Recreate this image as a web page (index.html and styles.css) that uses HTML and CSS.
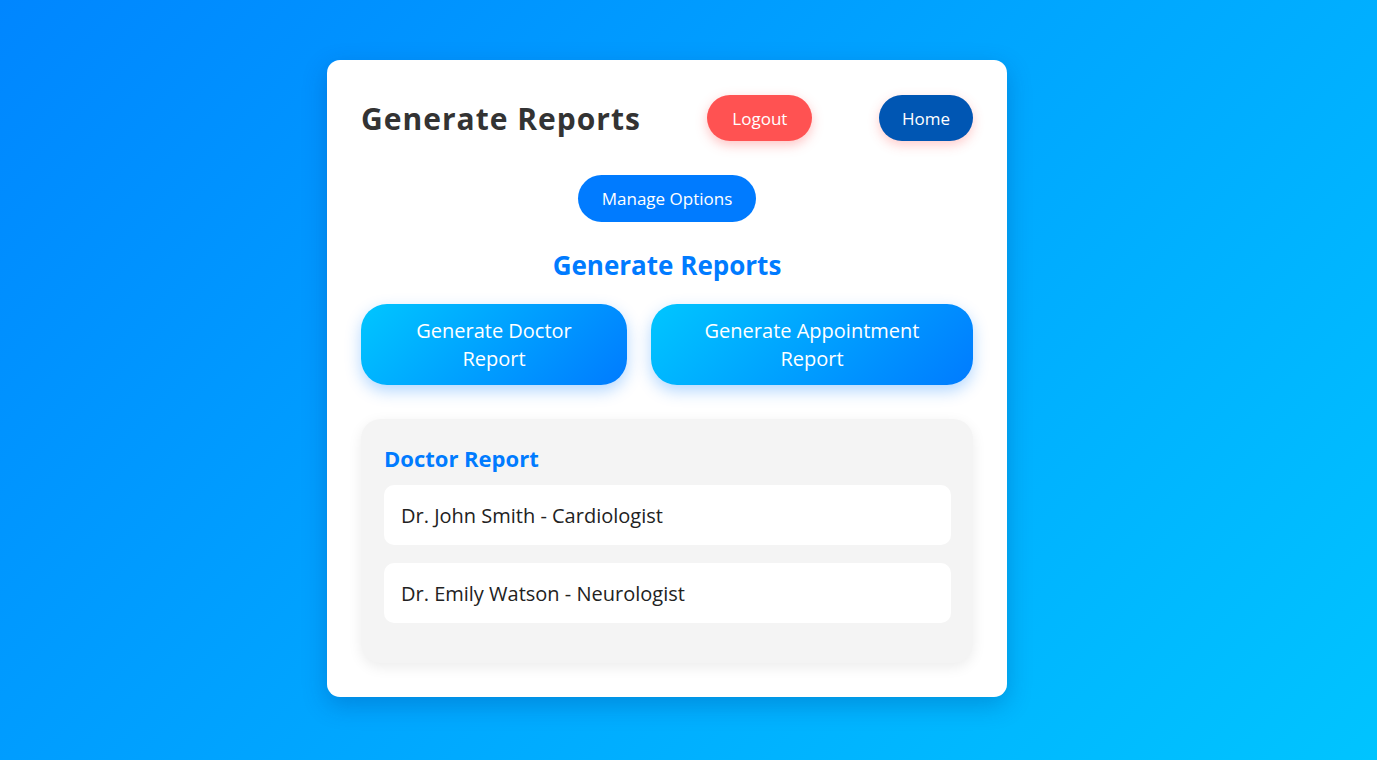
FILE: index.html
```html
<!DOCTYPE html>
<html lang="en">
<head>
<meta charset="utf-8">
<title>Generate Reports</title>
<link rel="stylesheet" href="styles.css">
</head>
<body>
<div class="card">
  <header class="header">
    <h1 class="title">Generate Reports</h1>
    <button class="btn btn-logout">Logout</button>
    <button class="btn btn-home">Home</button>
  </header>
  <div class="manage-row">
    <button class="btn btn-manage">Manage Options</button>
  </div>
  <h2 class="section-title">Generate Reports</h2>
  <div class="report-btns">
    <button class="btn-report">Generate Doctor Report</button>
    <button class="btn-report">Generate Appointment Report</button>
  </div>
  <section class="report-panel">
    <h3 class="panel-title">Doctor Report</h3>
    <div class="report-item">Dr. John Smith - Cardiologist</div>
    <div class="report-item">Dr. Emily Watson - Neurologist</div>
  </section>
</div>
</body>
</html>
```
FILE: styles.css
```css
* { box-sizing: border-box; }
html, body { height: 100%; }
body {
  margin: 0;
  font-family: "Open Sans", "Noto Sans", sans-serif;
  background: linear-gradient(135deg, #0086ff 0%, #00a6ff 50%, #00c4ff 100%);
  display: flex;
  justify-content: center;
  align-items: flex-start;
  padding: 60px 43px 0 0;
}
.card {
  width: 680px;
  height: 637px;
  background: #fff;
  border-radius: 13px;
  padding: 35px 34px 34px;
  box-shadow: 0 8px 24px rgba(0, 40, 120, 0.25);
}
.header {
  display: flex;
  justify-content: space-between;
  align-items: center;
  height: 46px;
}
.title {
  margin: 0;
  font-size: 30px;
  font-weight: 700;
  color: #333;
  letter-spacing: 1px;
}
.btn {
  border: none;
  color: #fff;
  font-family: inherit;
  font-size: 17px;
  border-radius: 25px;
  height: 46px;
  padding: 0 23px;
  cursor: pointer;
}
.btn-logout {
  background: #ff5252;
  padding: 0 25px;
  box-shadow: 0 4px 12px rgba(255, 82, 82, 0.35);
}
.btn-home {
  background: #0056b3;
  box-shadow: 0 4px 12px rgba(255, 82, 82, 0.3);
}
.manage-row {
  display: flex;
  justify-content: center;
  margin-top: 34px;
}
.btn-manage {
  background: #007bff;
  height: 47px;
  padding: 0 24px;
}
.section-title {
  margin: 22px 0 0;
  text-align: center;
  color: #007bff;
  font-size: 26px;
  font-weight: 700;
  line-height: 42px;
}
.report-btns {
  display: grid;
  grid-template-columns: 266fr 322fr;
  gap: 24px;
  margin-top: 18px;
}
.btn-report {
  height: 81px;
  border: none;
  border-radius: 26px;
  background: linear-gradient(135deg, #00c6ff, #007bff);
  color: #fff;
  font-family: inherit;
  font-size: 20px;
  line-height: 28px;
  padding: 0 50px;
  box-shadow: 0 6px 16px rgba(0, 123, 255, 0.3);
}
.report-panel {
  margin-top: 34px;
  background: #f4f4f4;
  border-radius: 20px;
  padding: 24px 22px 23px 23px;
  box-shadow: 0 4px 14px rgba(0, 0, 0, 0.08);
  height: 244px;
}
.panel-title {
  margin: 0 0 12px;
  color: #007bff;
  font-size: 22px;
  font-weight: 700;
  line-height: 30px;
}
.report-item {
  background: #fff;
  border-radius: 10px;
  height: 60px;
  display: flex;
  align-items: center;
  padding: 0 17px;
  font-size: 20px;
  color: #222;
  margin-bottom: 18px;
}
```
